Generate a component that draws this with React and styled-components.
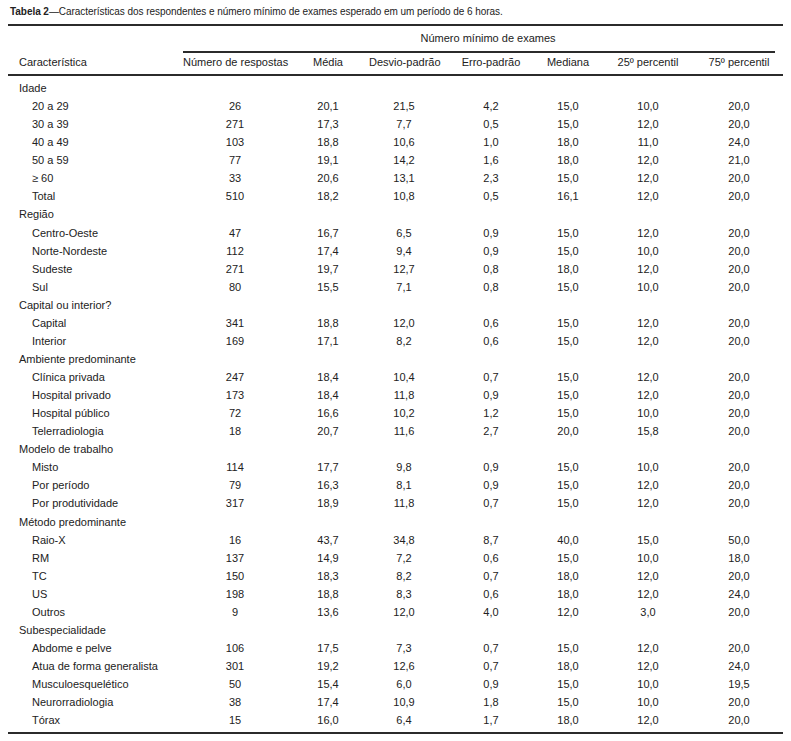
import React from "react";
import styled, { createGlobalStyle } from "styled-components";

const GlobalStyle = createGlobalStyle`
  html, body { margin: 0; padding: 0; background: #ffffff; }
  body {
    font-family: "Liberation Sans", Arial, sans-serif;
    color: #222222;
    -webkit-font-smoothing: antialiased;
  }
`;

const Page = styled.div`
  width: 775px;
  padding-left: 8px;
`;

const Title = styled.div`
  height: 24px;
  line-height: 24px;
  padding-left: 2px;
  font-size: 10px;
  letter-spacing: -0.05px;
  white-space: nowrap;
  b { font-weight: 700; }
`;

const Table = styled.table`
  width: 775px;
  table-layout: fixed;
  border-collapse: separate;
  border-spacing: 0;
  border-top: 2px solid #2b2b2b;
  font-size: 11px;
`;

const GroupHead = styled.th`
  font-weight: 400;
  text-align: center;
  white-space: nowrap;
  line-height: 14px;
  padding: 5px 0 6px 18px;
  border-bottom: 2px solid #2b2b2b;
`;

const LabelHead = styled.th`
  font-weight: 400;
  text-align: left;
  vertical-align: bottom;
  white-space: nowrap;
  line-height: 14px;
  padding: 0 0 5px 11px;
  border-bottom: 2px solid #2b2b2b;
`;

const ColHead = styled.th`
  font-weight: 400;
  text-align: center;
  white-space: nowrap;
  line-height: 14px;
  padding: 2px 0 5px 0;
  border-bottom: 2px solid #2b2b2b;
`;

const Body = styled.tbody`
  tr:first-child td { padding-top: 3px; }
  tr:last-child td {
    padding-bottom: 3px;
    border-bottom: 2px solid #2b2b2b;
  }
`;

const Cell = styled.td`
  text-align: center;
  white-space: nowrap;
  line-height: 18.06px;
  padding: 0;
`;

const Label = styled.td`
  text-align: left;
  white-space: nowrap;
  line-height: 18.06px;
  padding: 0 0 0 ${(p) => (p.$sub ? "24px" : "11px")};
`;

const widths = [175, 104, 82, 70, 104, 50, 110, 72, 8];

const headers = [
  "Número de respostas",
  "Média",
  "Desvio-padrão",
  "Erro-padrão",
  "Mediana",
  "25º percentil",
  "75º percentil",
];

const groups = [
  {
    name: "Idade",
    rows: [
      ["20 a 29", "26", "20,1", "21,5", "4,2", "15,0", "10,0", "20,0"],
      ["30 a 39", "271", "17,3", "7,7", "0,5", "15,0", "12,0", "20,0"],
      ["40 a 49", "103", "18,8", "10,6", "1,0", "18,0", "11,0", "24,0"],
      ["50 a 59", "77", "19,1", "14,2", "1,6", "18,0", "12,0", "21,0"],
      ["≥ 60", "33", "20,6", "13,1", "2,3", "15,0", "12,0", "20,0"],
      ["Total", "510", "18,2", "10,8", "0,5", "16,1", "12,0", "20,0"],
    ],
  },
  {
    name: "Região",
    rows: [
      ["Centro-Oeste", "47", "16,7", "6,5", "0,9", "15,0", "12,0", "20,0"],
      ["Norte-Nordeste", "112", "17,4", "9,4", "0,9", "15,0", "10,0", "20,0"],
      ["Sudeste", "271", "19,7", "12,7", "0,8", "18,0", "12,0", "20,0"],
      ["Sul", "80", "15,5", "7,1", "0,8", "15,0", "10,0", "20,0"],
    ],
  },
  {
    name: "Capital ou interior?",
    rows: [
      ["Capital", "341", "18,8", "12,0", "0,6", "15,0", "12,0", "20,0"],
      ["Interior", "169", "17,1", "8,2", "0,6", "15,0", "12,0", "20,0"],
    ],
  },
  {
    name: "Ambiente predominante",
    rows: [
      ["Clínica privada", "247", "18,4", "10,4", "0,7", "15,0", "12,0", "20,0"],
      ["Hospital privado", "173", "18,4", "11,8", "0,9", "15,0", "12,0", "20,0"],
      ["Hospital público", "72", "16,6", "10,2", "1,2", "15,0", "10,0", "20,0"],
      ["Telerradiologia", "18", "20,7", "11,6", "2,7", "20,0", "15,8", "20,0"],
    ],
  },
  {
    name: "Modelo de trabalho",
    rows: [
      ["Misto", "114", "17,7", "9,8", "0,9", "15,0", "10,0", "20,0"],
      ["Por período", "79", "16,3", "8,1", "0,9", "15,0", "12,0", "20,0"],
      ["Por produtividade", "317", "18,9", "11,8", "0,7", "15,0", "12,0", "20,0"],
    ],
  },
  {
    name: "Método predominante",
    rows: [
      ["Raio-X", "16", "43,7", "34,8", "8,7", "40,0", "15,0", "50,0"],
      ["RM", "137", "14,9", "7,2", "0,6", "15,0", "10,0", "18,0"],
      ["TC", "150", "18,3", "8,2", "0,7", "18,0", "12,0", "20,0"],
      ["US", "198", "18,8", "8,3", "0,6", "18,0", "12,0", "24,0"],
      ["Outros", "9", "13,6", "12,0", "4,0", "12,0", "3,0", "20,0"],
    ],
  },
  {
    name: "Subespecialidade",
    rows: [
      ["Abdome e pelve", "106", "17,5", "7,3", "0,7", "15,0", "12,0", "20,0"],
      ["Atua de forma generalista", "301", "19,2", "12,6", "0,7", "18,0", "12,0", "24,0"],
      ["Musculoesquelético", "50", "15,4", "6,0", "0,9", "15,0", "10,0", "19,5"],
      ["Neurorradiologia", "38", "17,4", "10,9", "1,8", "15,0", "10,0", "20,0"],
      ["Tórax", "15", "16,0", "6,4", "1,7", "18,0", "12,0", "20,0"],
    ],
  },
];

export default function App() {
  const bodyRows = [];
  groups.forEach((g) => {
    bodyRows.push(
      <tr key={g.name}>
        <Label>{g.name}</Label>
        {Array.from({ length: 8 }).map((_, i) => (
          <Cell key={i} />
        ))}
      </tr>
    );
    g.rows.forEach((r) => {
      bodyRows.push(
        <tr key={g.name + r[0]}>
          <Label $sub>{r[0]}</Label>
          {r.slice(1).map((v, i) => (
            <Cell key={i}>{v}</Cell>
          ))}
          <Cell />
        </tr>
      );
    });
  });

  return (
    <>
      <GlobalStyle />
      <Page>
        <Title>
          <b>Tabela 2</b>—Características dos respondentes e número mínimo de exames esperado em um período de 6 horas.
        </Title>
        <Table>
          <colgroup>
            {widths.map((w, i) => (
              <col key={i} style={{ width: w }} />
            ))}
          </colgroup>
          <thead>
            <tr>
              <LabelHead rowSpan={2}>Característica</LabelHead>
              <GroupHead colSpan={7}>Número mínimo de exames</GroupHead>
              <th />
            </tr>
            <tr>
              {headers.map((h) => (
                <ColHead key={h}>{h}</ColHead>
              ))}
              <ColHead />
            </tr>
          </thead>
          <Body>{bodyRows}</Body>
        </Table>
      </Page>
    </>
  );
}
